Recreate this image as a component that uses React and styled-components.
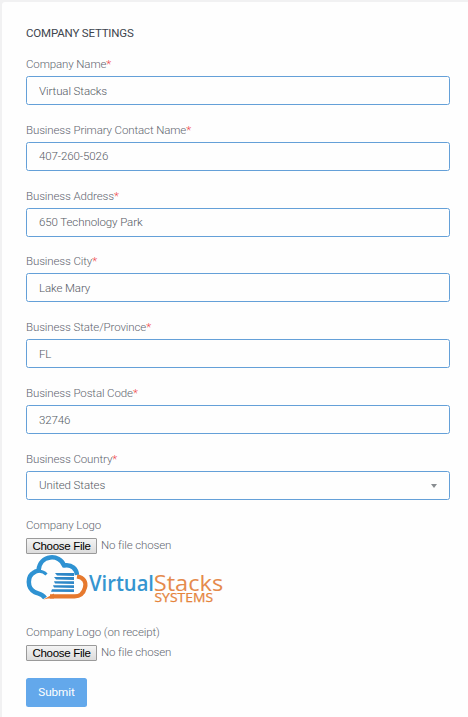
import React from "react";
import styled, { createGlobalStyle } from "styled-components";

const Global = createGlobalStyle`
  * { box-sizing: border-box; }
  body { margin: 0; background: #f1f1f2; font-family: Roboto, "Liberation Sans", sans-serif; overflow: hidden; }
`;
const Page = styled.main`
  height: 717px;
  padding: 2px 0 0 2px;
`;
const Panel = styled.form`
  height: 715px;
  padding: 24px 18px 0 24px;
  background: #fefefe;
  border-top-left-radius: 3px;
`;
const Heading = styled.h1`
  margin: 0 0 15px;
  font-size: 11.5px;
  line-height: 15px;
  font-weight: 400;
  color: #3d454d;
  letter-spacing: -0.18px;
`;
const Field = styled.div`
  height: 65.83px;
`;
const Label = styled.label`
  display: block;
  height: 20px;
  font-size: 11.5px;
  line-height: 16px;
  font-weight: 300;
  letter-spacing: -0.12px;
  color: #626670;
`;
const Required = styled.span`
  color: #f0464b;
`;
const controlText = `
  display: block;
  width: 100%;
  height: 29px;
  padding: 0 12px;
  border: 1px solid #64a0d8;
  border-radius: 2.5px;
  background: #fefefe;
  font: 300 11.5px/27px Roboto, "Liberation Sans", sans-serif;
  letter-spacing: -0.1px;
  color: #555a64;
  outline: none;
`;
const TextInput = styled.input`${controlText}`;
const SelectBox = styled.div`
  ${controlText}
  display: flex;
  align-items: center;
  justify-content: space-between;
  line-height: 28px;
`;
const Arrow = styled.span`
  border: 3px solid transparent;
  border-top: 4px solid #888c90;
  border-bottom: 0;
  margin-top: 1px;
`;
const FileGroup = styled.div`
  height: ${(p) => p.$height}px;
`;
const FileRow = styled.div`
  display: flex;
  gap: 4px;
`;
const FileButton = styled.button`
  width: 71px;
  height: 16px;
  margin-top: 1px;
  padding: 0;
  border: 1px solid #9a9a9a;
  border-radius: 1px;
  background: linear-gradient(#f4f4f4, #dcdcdc);
  font: 11.5px/14px "Liberation Sans", sans-serif;
  letter-spacing: -0.3px;
  color: #000;
`;
const FileStatus = styled.span`
  font-size: 11.5px;
  line-height: 16px;
  font-weight: 300;
  letter-spacing: -0.12px;
  color: #626670;
`;
const Logo = styled.svg`
  display: block;
  margin-top: 1px;
  overflow: visible;
`;
const Submit = styled.button`
  display: block;
  width: 61px;
  height: 29px;
  padding: 0;
  border: 0;
  border-radius: 2.5px;
  background: #63a8eb;
  color: #fff;
  font: 400 11.7px/29px Roboto, "Liberation Sans", sans-serif;
  letter-spacing: -0.1px;
`;

const fields = [
  ["Company Name", "Virtual Stacks"],
  ["Business Primary Contact Name", "407-260-5026"],
  ["Business Address", "650 Technology Park"],
  ["Business City", "Lake Mary"],
  ["Business State/Province", "FL"],
  ["Business Postal Code", "32746"],
];

function CompanyLogo() {
  return (
    <Logo width="200" height="50" viewBox="0 0 200 50" role="img" aria-label="VirtualStacks Systems">
      <path
        d="M19 43 C16 38 12 39 8.5 37 C1 33 1 21 8 17.5 C10 16 11.3 16 12.5 15.5 C13.5 -0.5 34 -1.5 38 10.5 C46 9 50.5 14 51 20"
        fill="none" stroke="#2e92d2" strokeWidth="4.5" strokeLinejoin="round"
      />
      <path d="M11.5 16.5 C15.5 15.8 18 17 20.5 19.5" fill="none" stroke="#2e92d2" strokeWidth="3" />
      <path
        d="M51 21.5 C58 22.5 60.5 27 59 32.5 C57.5 38.5 54 41.4 48.5 41.4 H24"
        fill="none" stroke="#e6792e" strokeWidth="4.2"
      />
      <path d="M17.5 44.5 L28 38.5 V43.5 H22Z" fill="#e6792e" />
      <g fill="#2e87c7">
        <path d="M29 18 H48 V21 L31 20.6Z" />
        <path d="M28 22.1 H48 V25 L30 24.6Z" />
        <path d="M28 26.2 H48 V29 L29 28.6Z" />
        <path d="M27 30.2 H48 V33 L28 32.6Z" />
        <path d="M26 34.3 H48 V37 L25 36.8Z" />
      </g>
      <g fontFamily='"Open Sans", sans-serif'>
        <text x="63" y="35.5" fontSize="22" fontWeight="600" fill="#3595d0" textLength="65" lengthAdjust="spacingAndGlyphs">Virtual</text>
        <text x="127.7" y="35.5" fontSize="22" fill="#e58a4c" textLength="69.5" lengthAdjust="spacingAndGlyphs">Stacks</text>
        <text x="128.5" y="46.7" fontSize="12.2" fontWeight="500" fill="#e5843c" stroke="#e5843c" strokeWidth="0.25" textLength="58.5" lengthAdjust="spacingAndGlyphs">SYSTEMS</text>
      </g>
    </Logo>
  );
}

function FilePicker() {
  return (
    <FileRow>
      <FileButton type="button">Choose File</FileButton>
      <FileStatus>No file chosen</FileStatus>
    </FileRow>
  );
}

export default function App() {
  return (
    <Page>
      <Global />
      <Panel onSubmit={(e) => e.preventDefault()}>
        <Heading>COMPANY SETTINGS</Heading>
        {fields.map(([label, value]) => (
          <Field key={label}>
            <Label>{label}<Required>*</Required></Label>
            <TextInput aria-label={label} defaultValue={value} />
          </Field>
        ))}
        <Field>
          <Label>Business Country<Required>*</Required></Label>
          <SelectBox role="combobox" aria-label="Business Country">United States<Arrow /></SelectBox>
        </Field>
        <FileGroup $height={107.2}>
          <Label>Company Logo</Label>
          <FilePicker />
          <CompanyLogo />
        </FileGroup>
        <FileGroup $height={54}>
          <Label>Company Logo (on receipt)</Label>
          <FilePicker />
        </FileGroup>
        <Submit>Submit</Submit>
      </Panel>
    </Page>
  );
}
